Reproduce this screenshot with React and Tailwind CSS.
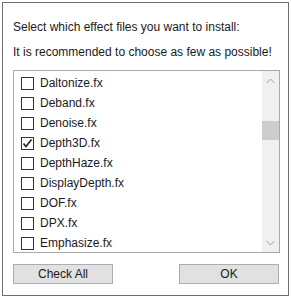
import React, { useState } from 'react';

const files = [
  'Daltonize.fx',
  'Deband.fx',
  'Denoise.fx',
  'Depth3D.fx',
  'DepthHaze.fx',
  'DisplayDepth.fx',
  'DOF.fx',
  'DPX.fx',
  'Emphasize.fx',
];

const Checkbox = ({ checked }) => (
  <span className="w-[13px] h-[13px] border border-[#333333] bg-white flex items-center justify-center shrink-0">
    {checked && (
      <svg width="11" height="11" viewBox="0 0 11 11">
        <polyline points="1.5,5.5 4,8.5 9.5,1.5" fill="none" stroke="#222" strokeWidth="1.6" />
      </svg>
    )}
  </span>
);

const App = () => {
  const [checked, setChecked] = useState({ 'Depth3D.fx': true });

  const toggle = (name) => setChecked({ ...checked, [name]: !checked[name] });

  return (
    <div
      className="w-[291px] h-[299px] bg-white pt-[2px] pl-[2px] text-[12px] text-[#1a1a1a]"
      style={{ fontFamily: '"Liberation Sans", Arial, sans-serif' }}
    >
      <div className="w-[287px] h-[294px] border border-[#6e6e6e] bg-white pl-[10px] pt-[16px] flex flex-col">
        {/* Header text */}
        <p className="leading-[16px]">Select which effect files you want to install:</p>
        <p className="leading-[16px] mt-[9px]">It is recommended to choose as few as possible!</p>

        {/* File list */}
        <div className="mt-[10px] w-[267px] h-[183px] border border-[#a9a9a9] flex overflow-hidden">
          <ul className="flex-1 pt-[2px] overflow-hidden">
            {files.map((name) => (
              <li
                key={name}
                onClick={() => toggle(name)}
                className="h-[20px] flex items-center pl-[7px] gap-[6px] cursor-default"
              >
                <Checkbox checked={!!checked[name]} />
                <span>{name}</span>
              </li>
            ))}
          </ul>
          <div className="w-[17px] bg-[#f0f0f0] flex flex-col items-center">
            <div className="h-[17px] flex items-center justify-center mt-[1px]">
              <svg width="9" height="6" viewBox="0 0 9 6">
                <polyline points="0.5,5 4.5,1 8.5,5" fill="none" stroke="#a3a3a3" strokeWidth="1" />
              </svg>
            </div>
            <div className="w-[17px] h-[19px] bg-[#cdcdcd] mt-[32px]" />
            <div className="flex-1" />
            <div className="h-[17px] flex items-center justify-center mb-[1px]">
              <svg width="9" height="6" viewBox="0 0 9 6">
                <polyline points="0.5,1 4.5,5 8.5,1" fill="none" stroke="#a3a3a3" strokeWidth="1" />
              </svg>
            </div>
          </div>
        </div>

        {/* Buttons */}
        <div className="mt-[11px] w-[266px] flex justify-between">
          <button className="w-[100px] h-[20px] bg-[#e1e1e1] border border-[#adadad] leading-[18px]">
            Check All
          </button>
          <button className="w-[100px] h-[20px] bg-[#e1e1e1] border border-[#adadad] leading-[18px]">
            OK
          </button>
        </div>
      </div>
    </div>
  );
};

export default App;
